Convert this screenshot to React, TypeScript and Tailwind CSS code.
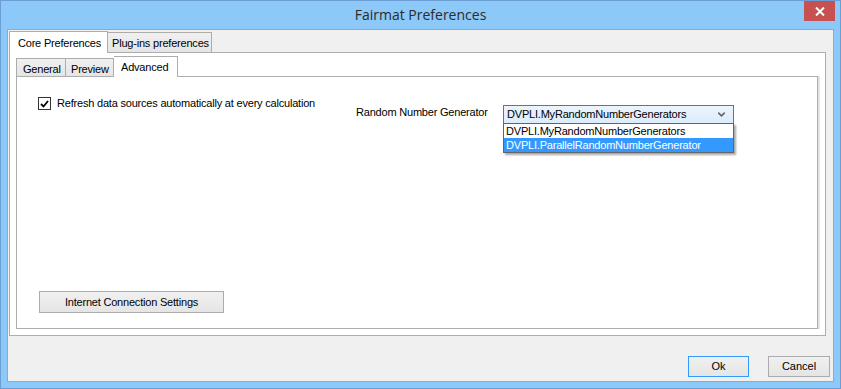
import { ChevronDown } from 'lucide-react';

const font = { fontFamily: '"Liberation Sans", Arial, sans-serif' };

const TitleBar = () => (
  <div className="flex h-[28px] items-start">
    <div className="w-[40px]" />
    <div
      className="flex-1 pt-[5px] text-center text-[14px] leading-[18px] text-[#2b2b2b]"
      style={{ fontFamily: '"Open Sans", "Noto Sans", sans-serif' }}
    >
      Fairmat Preferences
    </div>
    <div className="mr-[5px] w-[35px] flex justify-end">
      <div className="flex h-[20px] w-[31px] items-center justify-center bg-[#c75050]">
        <svg width="10" height="9" viewBox="0 0 10 9">
          <path d="M1 0.5 L9 8.5 M9 0.5 L1 8.5" stroke="#fff" strokeWidth="2" />
        </svg>
      </div>
    </div>
  </div>
);

const Checkbox = () => (
  <div className="flex h-[13px] w-[13px] shrink-0 items-center justify-center border border-[#333] bg-white">
    <svg width="9" height="8" viewBox="0 0 9 8">
      <path d="M1 4 L3.5 6.5 L8 1" fill="none" stroke="#000" strokeWidth="1.8" />
    </svg>
  </div>
);

const tabText = 'whitespace-nowrap text-[11px] leading-[14px] tracking-[-0.2px] text-black';
const idleTab = 'flex items-start border border-b-0 border-[#acacac] bg-gradient-to-b from-[#f0f0f0] to-[#e5e5e5]';

const AdvancedPage = () => (
  <div className="flex h-[253px] w-[802px] flex-col border border-[#adadad] bg-white shadow-[2px_0_0_#e3e3e3]">
    <div className="flex items-start tracking-[-0.2px]">
      <div className="ml-[21px] mt-[20px] flex w-[318px] items-center gap-[6px]">
        <Checkbox />
        <span className="whitespace-nowrap text-[11px] leading-[13px] text-black">
          Refresh data sources automatically at every calculation
        </span>
      </div>
      <div className="mt-[28px] flex items-start">
        <span className="w-[147px] whitespace-nowrap pt-[1px] text-[11px] leading-[13px] text-black">
          Random Number Generator
        </span>
        <div className="relative">
          <div className="flex h-[19px] w-[231px] items-center justify-between border border-[#3c7fb1] bg-gradient-to-b from-[#ecf4fc] to-[#dcecfc] pl-[3px] pr-[6px]">
            <span className="text-[11px] leading-[13px] text-black">DVPLI.MyRandomNumberGenerators</span>
            <ChevronDown size={11} strokeWidth={3.5} className="text-[#666]" />
          </div>
          <div className="absolute left-0 top-[18px] z-10 w-[231px] border border-[#646464] bg-white shadow-[2px_2px_2px_rgba(0,0,0,0.35)]">
            <div className="h-[14px] px-[2px] text-[11px] leading-[14px] text-black">
              DVPLI.MyRandomNumberGenerators
            </div>
            <div className="h-[14px] bg-[#3399ff] px-[2px] text-[11px] leading-[14px] text-white">
              DVPLI.ParallelRandomNumberGenerator
            </div>
          </div>
        </div>
      </div>
    </div>
    <div className="flex-1" />
    <div className="mb-[15px] ml-[22px]">
      <button className="h-[22px] w-[185px] border border-[#acacac] bg-gradient-to-b from-[#f0f0f0] to-[#e5e5e5] text-[11px] tracking-[-0.2px] text-black">
        Internet Connection Settings
      </button>
    </div>
  </div>
);

export default function App() {
  return (
    <div className="h-[389px] w-[841px] overflow-hidden bg-white" style={font}>
      <div className="flex h-[389px] w-[841px] flex-col border border-[#6b9ed4] bg-[#8cc8f8]">
        <TitleBar />
        <div className="mx-[6px] mb-[6px] flex flex-1 flex-col border border-[#7eaedb] bg-[#f0f0f0]">
          {/* outer tab control */}
          <div className="ml-[1px] mt-[1px] flex flex-col">
            <div className="flex items-end">
              <div className={`relative z-10 -mb-px flex h-[22px] w-[99px] items-start border border-b-0 border-[#adadad] bg-white pl-[8px] pt-[4px] ${tabText}`}>
                Core Preferences
              </div>
              <div className={`${idleTab} h-[20px] w-[104px] border-l-0 pl-[4px] pt-[3px] ${tabText}`}>
                Plug-ins preferences
              </div>
            </div>
            <div className="flex h-[284px] w-[817px] flex-col border border-[#adadad] bg-white px-[6px] pt-[3px]">
              {/* inner tab control */}
              <div className="flex items-end">
                <div className={`${idleTab} h-[18px] w-[50px] pl-[6px] pt-[3px] ${tabText}`}>
                  General
                </div>
                <div className={`${idleTab} h-[18px] w-[48px] border-l-0 pl-[5px] pt-[3px] ${tabText}`}>
                  Preview
                </div>
                <div className={`relative z-10 -mb-px flex h-[21px] w-[64px] items-start border border-l-0 border-b-0 border-[#adadad] bg-white pl-[7px] pt-[3px] ${tabText}`}>
                  Advanced
                </div>
              </div>
              <AdvancedPage />
            </div>
          </div>
          <div className="flex-1" />
          <div className="mb-[4px] mr-[3px] flex justify-end gap-[19px]">
            <button className="h-[21px] w-[61px] border border-[#3399ff] bg-gradient-to-b from-[#f0f0f0] to-[#e5e5e5] text-[11px] text-black">
              Ok
            </button>
            <button className="h-[21px] w-[62px] border border-[#acacac] bg-gradient-to-b from-[#f0f0f0] to-[#e5e5e5] text-[11px] text-black">
              Cancel
            </button>
          </div>
        </div>
      </div>
    </div>
  );
}
